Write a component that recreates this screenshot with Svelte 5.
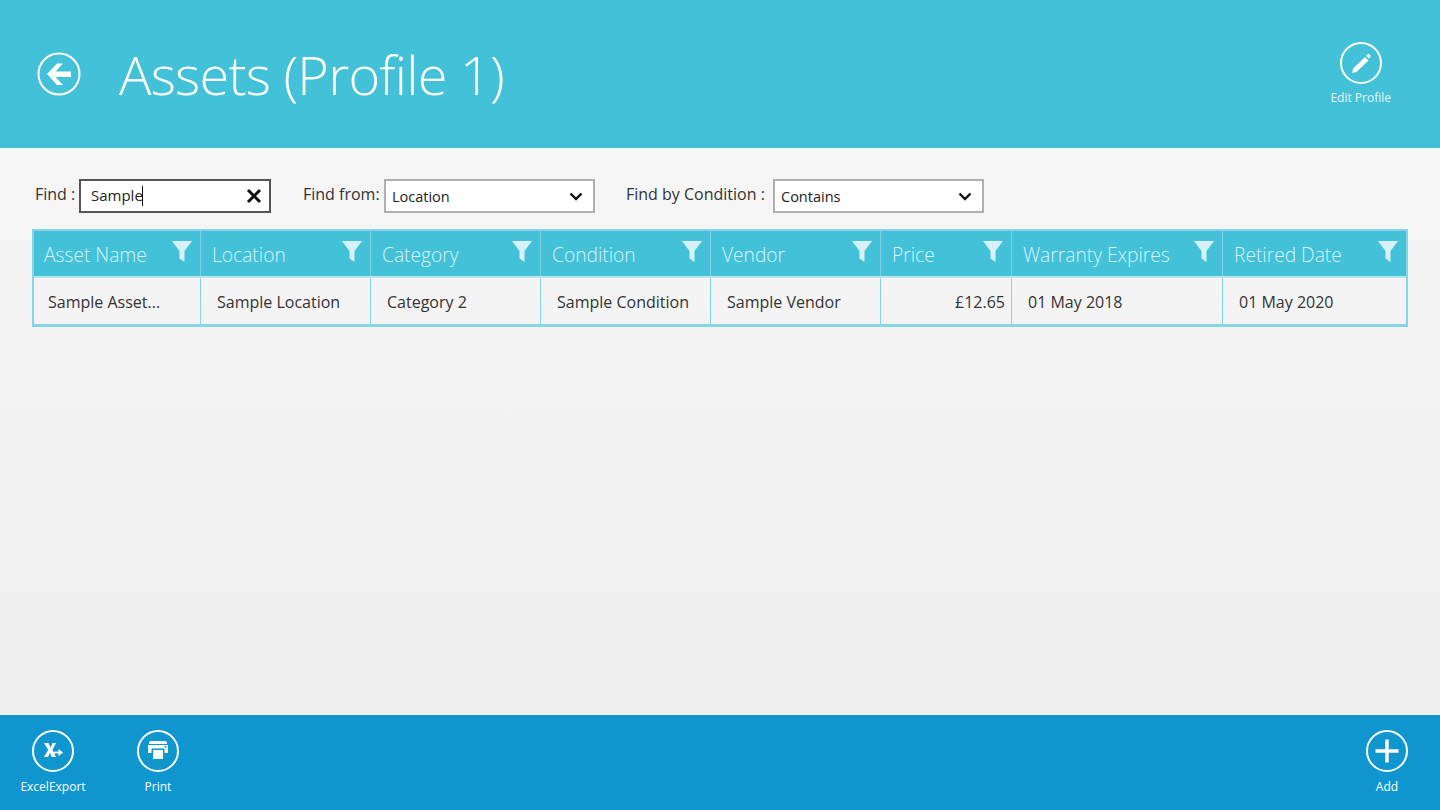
<script>
  let query = 'Sample';

  const columns = [
    { title: 'Asset Name', value: 'Sample Asset...', width: 167 },
    { title: 'Location', value: 'Sample Location', width: 170 },
    { title: 'Category', value: 'Category 2', width: 170 },
    { title: 'Condition', value: 'Sample Condition', width: 170 },
    { title: 'Vendor', value: 'Sample Vendor', width: 170 },
    { title: 'Price', value: '£12.65', width: 131, right: true },
    { title: 'Warranty Expires', value: '01 May 2018', width: 211 },
    { title: 'Retired Date', value: '01 May 2020', width: 183 }
  ];
</script>

<div class="page">
  <header class="top">
    <div class="heading">
      <svg class="back" width="44" height="44" viewBox="0 0 44 44" aria-hidden="true">
        <circle cx="22" cy="22" r="20.5" fill="none" stroke="#fff" stroke-width="2" />
        <path d="M10 22 L20 11.5 H26 L18.5 19.5 H34 V25 H18.5 L26 33 H20 Z" fill="#fff" />
      </svg>
      <h1>Assets (Profile 1)</h1>
    </div>
    <div class="action edit">
      <svg width="44" height="44" viewBox="0 0 44 44" aria-hidden="true">
        <circle cx="22" cy="22" r="20" fill="none" stroke="#fff" stroke-width="2" />
        <path d="M13 32 L14.2 27.5 L26 16 L29.5 19.5 L17.5 31 Z M27 14.8 L28.5 13.4 Q29.8 12.6 31 13.8 Q32 15 31 16.4 L29.8 17.6 Z" fill="#fff" />
      </svg>
      <span>Edit Profile</span>
    </div>
  </header>

  <main class="content">
    <div class="filters">
      <label class="find-label" for="find">Find :</label>
      <div class="find-box">
        <input id="find" bind:value={query} />
        <span class="caret"></span>
        <svg width="16" height="16" viewBox="0 0 16 16" aria-hidden="true">
          <path d="M2 2 L14 14 M14 2 L2 14" stroke="#111" stroke-width="3" fill="none" />
        </svg>
      </div>

      <span class="from-label">Find from:</span>
      <div class="select">
        <span>Location</span>
        <svg width="14" height="9" viewBox="0 0 14 9" aria-hidden="true">
          <path d="M1.5 1.5 L7 7 L12.5 1.5" stroke="#111" stroke-width="2.4" fill="none" />
        </svg>
      </div>

      <span class="cond-label">Find by Condition :</span>
      <div class="select">
        <span>Contains</span>
        <svg width="14" height="9" viewBox="0 0 14 9" aria-hidden="true">
          <path d="M1.5 1.5 L7 7 L12.5 1.5" stroke="#111" stroke-width="2.4" fill="none" />
        </svg>
      </div>
    </div>

    <div class="grid">
      <div class="row head">
        {#each columns as col}
          <div class="cell" style="width: {col.width}px">
            <span>{col.title}</span>
            <svg width="20" height="21" viewBox="0 0 20 21" aria-hidden="true">
              <path d="M0 0 H20 L12.5 10 V21 L7.5 17.5 V10 Z" fill="#d6f2f6" />
            </svg>
          </div>
        {/each}
      </div>
      <div class="row body">
        {#each columns as col}
          <div class="cell" class:right={col.right} style="width: {col.width}px">{col.value}</div>
        {/each}
      </div>
    </div>
  </main>

  <footer class="bottom">
    <div class="group">
      <div class="action excel">
        <svg width="44" height="44" viewBox="0 0 44 44" aria-hidden="true">
          <circle cx="22" cy="22" r="20" fill="none" stroke="#fff" stroke-width="2" />
          <path d="M13 14 H17.5 L19.5 18.5 L21.5 14 H25 L21.5 21 L25 28 H20.8 L19 23.8 L17 28 H13 L17.2 21 Z" fill="#fff" />
          <path d="M23 23.5 H30" stroke="#fff" stroke-width="1.8" />
          <path d="M27.5 20 L32 23.5 L27.5 27 Z" fill="#fff" />
        </svg>
        <span>ExcelExport</span>
      </div>
      <div class="action print">
        <svg width="44" height="44" viewBox="0 0 44 44" aria-hidden="true">
          <circle cx="22" cy="22" r="20" fill="none" stroke="#fff" stroke-width="2" />
          <path d="M15 12 H29 Q31 12 31 14 V15 H13 V14 Q13 12 15 12 Z" fill="#fff" />
          <path d="M12 16 H32 V24 H28.5 V19.5 H15.5 V24 H12 Z" fill="#fff" />
          <rect x="17" y="21" width="10" height="9" fill="#fff" />
          <rect x="28.5" y="17" width="2" height="1.5" fill="#0f96cf" />
        </svg>
        <span>Print</span>
      </div>
    </div>
    <div class="action add">
      <svg width="44" height="44" viewBox="0 0 44 44" aria-hidden="true">
        <circle cx="22" cy="22" r="20" fill="none" stroke="#fff" stroke-width="2" />
        <path d="M22 10.5 V33.5 M10.5 22 H33.5" stroke="#fff" stroke-width="3.4" />
      </svg>
      <span>Add</span>
    </div>
  </footer>
</div>

<style>
  :global(body) {
    margin: 0;
    font-family: "Open Sans", "Noto Sans", sans-serif;
  }

  .page {
    width: 1440px;
    height: 810px;
    display: flex;
    flex-direction: column;
    overflow: hidden;
  }

  .top {
    height: 148px;
    flex: none;
    box-sizing: border-box;
    padding: 41px 49px 0 37px;
    display: flex;
    justify-content: space-between;
    align-items: flex-start;
    background: #43c1d8;
  }

  .heading {
    display: flex;
    align-items: center;
    height: 66px;
  }

  .back {
    margin-top: -1px;
  }

  h1 {
    margin: 0 0 0 38px;
    color: #fff;
    font-size: 54px;
    font-weight: 300;
    line-height: 66px;
    letter-spacing: -0.75px;
    white-space: nowrap;
  }

  .action {
    display: flex;
    flex-direction: column;
    align-items: center;
    color: #fff;
    font-size: 12px;
    line-height: 16px;
    gap: 6px;
  }

  .edit {
    gap: 5px;
  }

  .edit span {
    color: #e4f6f9;
  }

  .content {
    flex: 1;
    padding: 31px 32px 0;
    min-height: 0;
    background: linear-gradient(#f6f6f6, #eeeeee);
  }

  .filters {
    height: 34px;
    display: flex;
    align-items: center;
    font-size: 16px;
    color: #333;
  }

  .find-label {
    margin: -5px 0 0 3px;
    width: 44px;
  }

  .find-box {
    width: 192px;
    height: 34px;
    box-sizing: border-box;
    border: 2px solid #555;
    background: #fff;
    display: flex;
    align-items: center;
    position: relative;
    padding: 0 7px 0 10px;
  }

  .find-box input {
    flex: 1;
    min-width: 0;
    border: 0;
    outline: 0;
    padding: 0;
    margin-top: -2px;
    font: inherit;
    font-size: 15px;
    color: #222;
    background: transparent;
    caret-color: transparent;
  }

  .caret {
    position: absolute;
    left: 61px;
    top: 5px;
    width: 1px;
    height: 20px;
    background: #111;
  }

  .from-label {
    margin: -5px 0 0 32px;
    width: 81px;
    white-space: nowrap;
  }

  .cond-label {
    margin: -5px 0 0 31px;
    width: 147px;
    white-space: nowrap;
  }

  .select {
    width: 211px;
    height: 34px;
    box-sizing: border-box;
    border: 2px solid #b0b0b0;
    background: #fff;
    display: flex;
    justify-content: space-between;
    align-items: center;
    padding: 0 10px 0 6px;
    font-size: 14.5px;
    color: #222;
  }

  .grid {
    margin-top: 16px;
    width: 1376px;
    box-sizing: border-box;
    border: 2px solid #86d5e3;
    border-bottom-width: 3px;
  }

  .row {
    display: flex;
  }

  .head {
    height: 45px;
    background: #43c1d8;
    border-bottom: 2px solid #b5e5ee;
  }

  .head .cell {
    display: flex;
    justify-content: space-between;
    padding: 0 8px 0 11px;
    color: #d9f3f7;
    font-size: 19.2px;
    font-weight: 300;
    line-height: 47px;
    border-right: 1px solid #7dd3e3;
  }

  .head .cell:first-child {
    padding-left: 10px;
  }

  .head svg {
    margin-top: 10px;
  }

  .body {
    height: 46px;
  }

  .body .cell {
    padding: 0 6px 0 16px;
    font-size: 16px;
    line-height: 49px;
    color: #333;
    border-right: 1px solid #86d5e3;
  }

  .body .cell:first-child {
    padding-left: 14px;
  }

  .cell {
    box-sizing: border-box;
    flex: none;
    white-space: nowrap;
  }

  .cell:last-child {
    border-right: 0;
  }

  .body .right {
    text-align: right;
  }

  .bottom {
    height: 95px;
    flex: none;
    box-sizing: border-box;
    padding: 14px 31px 0 21px;
    display: flex;
    justify-content: space-between;
    align-items: flex-start;
    background: #0f96cf;
  }

  .group {
    display: flex;
    gap: 51px;
  }

  .excel {
    width: 64px;
  }

  .print {
    width: 44px;
  }
</style>
